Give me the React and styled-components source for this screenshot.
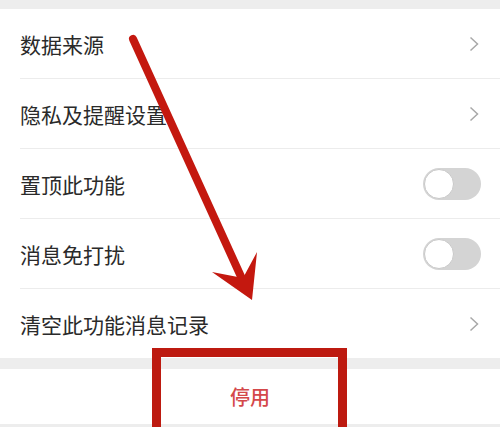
import React from "react";
import styled, { createGlobalStyle } from "styled-components";

const Global = createGlobalStyle`
  html, body {
    margin: 0;
    padding: 0;
    background: #ededed;
    font-family: "Noto Sans CJK SC", "Noto Sans", sans-serif;
  }
`;

const Page = styled.div`
  position: relative;
  width: 500px;
  height: 427px;
  overflow: hidden;
  background: #ededed;
  padding-top: 9px;
  box-sizing: border-box;
`;

const Section = styled.div`
  background: #fff;
  margin-bottom: ${(p) => p.gap || 0}px;
`;

const Row = styled.div`
  display: flex;
  align-items: center;
  justify-content: space-between;
  height: 70px;
  margin-left: 20px;
  padding-right: ${(p) => (p.toggle ? 19 : 21)}px;
  border-bottom: 1px solid #ececec;
  box-sizing: border-box;

  &:last-child {
    border-bottom: none;
    height: 69px;
  }
`;

const Label = styled.span`
  font-size: 21px;
  color: #2a2a2a;
  line-height: 1;
  margin-top: 1px;
`;

const Track = styled.div`
  position: relative;
  width: 58px;
  height: 32px;
  border-radius: 16px;
  background: #d4d4d4;
`;

const Knob = styled.div`
  position: absolute;
  left: 1px;
  top: 1px;
  width: 28px;
  height: 28px;
  border-radius: 50%;
  background: #fff;
  border: 1px solid #c9c9c9;
`;

const Button = styled.div`
  height: 55px;
  display: flex;
  align-items: center;
  justify-content: center;
  font-size: 20px;
  font-weight: 500;
  color: #d4484a;
  background: #fff;
`;

const Frame = styled.div`
  position: absolute;
  left: 152px;
  top: 348px;
  width: 195px;
  height: 120px;
  border: 9px solid #bd1a10;
  box-sizing: border-box;
`;

const Overlay = styled.svg`
  position: absolute;
  left: 0;
  top: 0;
  pointer-events: none;
`;

function Chevron() {
  return (
    <svg width="10" height="16" viewBox="0 0 10 16">
      <polyline points="1.5,1.5 8.5,8 1.5,14.5" fill="none" stroke="#a8a8a8" strokeWidth="1.5" />
    </svg>
  );
}

function Switch() {
  return (
    <Track>
      <Knob />
    </Track>
  );
}

const rows = [
  { label: "数据来源", kind: "link" },
  { label: "隐私及提醒设置", kind: "link" },
  { label: "置顶此功能", kind: "toggle" },
  { label: "消息免打扰", kind: "toggle" },
  { label: "清空此功能消息记录", kind: "link" },
];

export default function App() {
  return (
    <>
      <Global />
      <Page>
        <Section gap={11}>
          {rows.map((r) => (
            <Row key={r.label} toggle={r.kind === "toggle"}>
              <Label>{r.label}</Label>
              {r.kind === "toggle" ? <Switch /> : <Chevron />}
            </Row>
          ))}
        </Section>
        <Button>停用</Button>

        <Frame />
        <Overlay width="500" height="427" viewBox="0 0 500 427">
          <line x1="133" y1="39" x2="243" y2="281" stroke="#c4180f" strokeWidth="8" strokeLinecap="round" />
          <polygon points="212,272 252,300 257,252 243,278" fill="#c4180f" />
        </Overlay>
      </Page>
    </>
  );
}
